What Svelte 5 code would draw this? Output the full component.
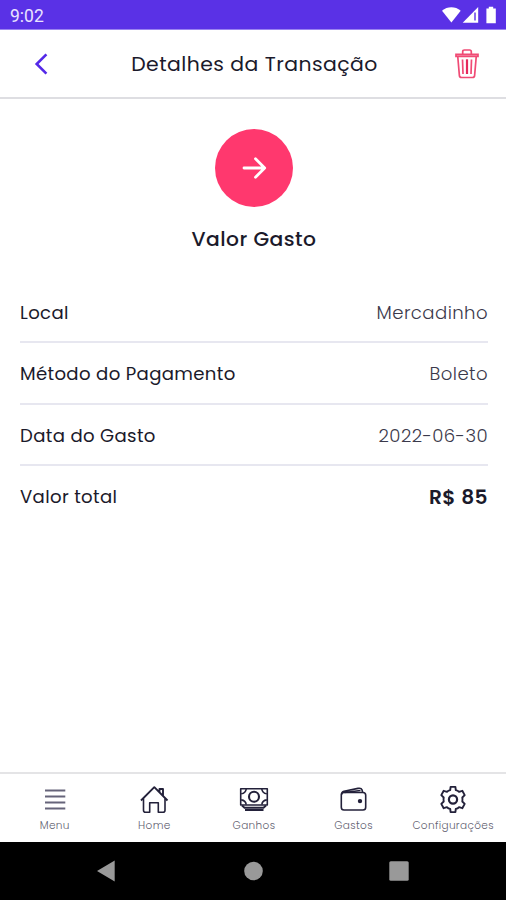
<script lang="ts">
  const details = [
    { label: 'Local', value: 'Mercadinho' },
    { label: 'Método do Pagamento', value: 'Boleto' },
    { label: 'Data do Gasto', value: '2022-06-30' },
    { label: 'Valor total', value: 'R$ 85', amount: true }
  ];

  const tabs = [
    { name: 'menu', label: 'Menu' },
    { name: 'home', label: 'Home' },
    { name: 'income', label: 'Ganhos' },
    { name: 'wallet', label: 'Gastos' },
    { name: 'settings', label: 'Configurações' }
  ];
</script>

<div class="screen">
  <div class="status-bar">
    <span class="time">9:02</span>
    <svg class="status-icons" width="56" height="18" viewBox="0 0 56 18" fill="#fff">
      <path d="M0 4.8C5.5 .2 13.2 .2 18.7 4.8L9.4 16.5Z" />
      <path d="M36.2 1v15.8H20.7Z" />
      <path d="M32.3 6.5h1.4v8h-1.4z" fill="#5a31e6" />
      <path d="M46.8 .7h4.4v1.8h2.6v14.7H44.4V2.5h2.4z" />
    </svg>
  </div>

  <header>
    <button class="back" aria-label="Voltar">
      <svg width="14" height="22" viewBox="0 0 14 22" fill="none" stroke="#5429e8" stroke-width="2.6">
        <path d="M12.4 1.4 2.7 11l9.7 9.6" />
      </svg>
    </button>
    <h1>Detalhes da Transação</h1>
    <button class="delete" aria-label="Excluir">
      <svg width="24" height="30" viewBox="0 0 24 30" fill="none" stroke="#f04b75" stroke-width="1.7">
        <path d="M7.7 5V2.7Q7.7 1 9.4 1h5.2q1.7 0 1.7 1.7V5" />
        <path d="M1 5.3h22v2H1zM2.8 8l1.6 18.6q.2 1.9 2.2 1.9h10.8q2 0 2.2-1.9L21.2 8" />
        <path d="M7.5 10.5l.5 14.5M16.5 10.5 16 25" stroke-width="1.7" />
        <path d="M12 10.3V25" stroke="#e52a5c" stroke-width="2.2" />
      </svg>
    </button>
  </header>

  <main>
    <div class="hero">
      <div class="circle">
        <svg width="26" height="24" viewBox="0 0 26 24" fill="none" stroke="#fff" stroke-width="2.8" stroke-linecap="round" stroke-linejoin="round">
          <path d="M3 12h20.5M14.5 2.8l9.2 9.2-9.2 9.2" />
        </svg>
      </div>
      <h2>Valor Gasto</h2>
    </div>

    <div class="details">
      {#each details as item}
        <div class="row">
          <span class="label">{item.label}</span>
          <span class="value" class:amount={item.amount}>{item.value}</span>
        </div>
      {/each}
    </div>
  </main>

  <nav class="tabs">
    {#each tabs as tab}
      <div class="tab">
        <svg width="30" height="30" viewBox="0 0 30 30" fill="none" stroke="#23213a" stroke-width="1.6" stroke-linejoin="round">
          {#if tab.name === 'menu'}
            <path d="M5 6.6h20.3M5 12.6h20.3M5 18.6h20.3M5 24.4h20.3" stroke="#66647a" stroke-width="2" />
          {:else if tab.name === 'home'}
            <path d="M4.5 14.5v11.7q0 2 2 2h4.2v-9.5h8.6v9.5H24q2 0 2-2V14.5" />
            <path d="M2 16.5 15.3 3.2l13.2 13.3M20.5 8V5h3.5v6.5" stroke-width="1.9" />
          {:else if tab.name === 'income'}
            <path d="M1.7 4.7h26.6V21H1.7z" />
            <circle cx="15" cy="12.7" r="5" stroke-width="2.1" />
            <path d="M7.2 5q-.5 4.2-5 4.8M22.8 5q.5 4.2 5 4.8M7.2 20.7q-.5-4.2-5-4.8M22.8 20.7q.5-4.2 5-4.8" />
            <path d="M3 21.5 5.5 23.7h19l2.5-2.2M6 26h18.5" stroke-width="1.9" />
          {:else if tab.name === 'wallet'}
            <rect x="2.3" y="8.5" width="24.4" height="17.5" rx="2.7" />
            <path d="M2.5 10.5Q2.5 8 5 7.2L19 4.4q3.2-.7 4 1.3l.7 2.800M5.500 8.500l16-2" />
            <circle cx="21" cy="17.1" r="1.4" fill="#23213a" />
          {:else}
            <path d="M12.6 2.9h4.8l.4 3.2q1.900.5 3.200 1.700l3.300-1 2.400 4.300-2.400 2.400q.4 2 0 4l2.400 2.400-2.400 4.300-3.300-1q-1.300 1.200-3.200 1.700l-.4 3.200h-4.800l-.4-3.200Q10.300 24.400 9 23.200l-3.300 1-2.400-4.300 2.400-2.400q-.4-2 0-4L3.300 11.100l2.400-4.300 3.300 1q1.300-1.200 3.200-1.700z" stroke-width="1.9" />
            <circle cx="15" cy="15.5" r="4.1" stroke-width="2.2" />
          {/if}
        </svg>
        <span>{tab.label}</span>
      </div>
    {/each}
  </nav>

  <div class="system-bar">
    <svg width="20" height="22" viewBox="0 0 20 22" fill="#999"><path d="M1 11 18.7 .5v21z" /></svg>
    <svg width="20" height="20" viewBox="0 0 20 20" fill="#999"><circle cx="10.5" cy="10" r="9.3" /></svg>
    <svg width="20" height="20" viewBox="0 0 20 20" fill="#999"><rect x=".3" y=".3" width="19.4" height="19.4" rx="1.5" /></svg>
  </div>
</div>

<style>
  :global(body) {
    margin: 0;
    background: #fff;
  }

  .screen {
    display: flex;
    flex-direction: column;
    width: 506px;
    height: 900px;
    overflow: hidden;
    background: #fff;
    color: #1b1a2b;
    font-family: Poppins, Inter, sans-serif;
  }

  .status-bar {
    display: flex;
    align-items: center;
    justify-content: space-between;
    box-sizing: border-box;
    height: 30px;
    padding: 1px 8px 0 10px;
    border-bottom: 1px solid #9a83f0;
    background: #5a31e6;
  }

  .time {
    color: #e9e3ff;
    font-family: Roboto, sans-serif;
    font-size: 17.5px;
    line-height: 30px;
    padding-top: 2px;
  }

  header {
    display: flex;
    align-items: center;
    justify-content: space-between;
    box-sizing: border-box;
    height: 69px;
    padding: 0 27px 0 34px;
    border-bottom: 2px solid #dedee2;
  }

  button {
    display: flex;
    padding: 0;
    border: 0;
    background: none;
  }

  h1 {
    margin: 0 0 0 6px;
    font-size: 20.4px;
    font-weight: 400;
    letter-spacing: 0.45px;
    white-space: nowrap;
  }

  main {
    flex: 1;
  }

  .hero {
    display: flex;
    flex-direction: column;
    align-items: center;
    padding: 29.5px 0 0 2px;
  }

  .circle {
    display: flex;
    align-items: center;
    justify-content: center;
    width: 78px;
    height: 78px;
    border-radius: 50%;
    background: #ff386e;
  }

  h2 {
    margin: 18.5px 0 0;
    font-size: 20.3px;
    line-height: 28px;
    font-weight: 500;
    letter-spacing: 0.45px;
  }

  .details {
    padding: 28.9px 18px 0 20px;
  }

  .row {
    display: flex;
    align-items: center;
    justify-content: space-between;
    box-sizing: border-box;
    height: 61.5px;
    padding-top: 1px;
    border-bottom: 2px solid #e7e7f0;
    font-size: 18.1px;
    letter-spacing: 0.35px;
  }

  .row:last-child {
    border-bottom-color: transparent;
  }

  .value {
    color: #3b394b;
    font-weight: 300;
    letter-spacing: 0.42px;
  }

  .value.amount {
    color: #1b1a2b;
    font-size: 20.2px;
    font-weight: 600;
  }

  .tabs {
    display: flex;
    box-sizing: border-box;
    height: 70px;
    padding: 10px 3px 0 5px;
    border-top: 2px solid #e4e4e6;
  }

  .tab {
    display: flex;
    flex: 1 0 0;
    min-width: 0;
    flex-direction: column;
    align-items: center;
  }

  .tab span {
    margin-top: 5px;
    color: #626170;
    font-size: 10.5px;
    font-weight: 300;
    line-height: 14px;
    letter-spacing: 0.35px;
  }

  .system-bar {
    display: flex;
    align-items: center;
    justify-content: space-between;
    box-sizing: border-box;
    height: 58px;
    padding: 0 97px 0 96px;
    background: #000;
  }
</style>
